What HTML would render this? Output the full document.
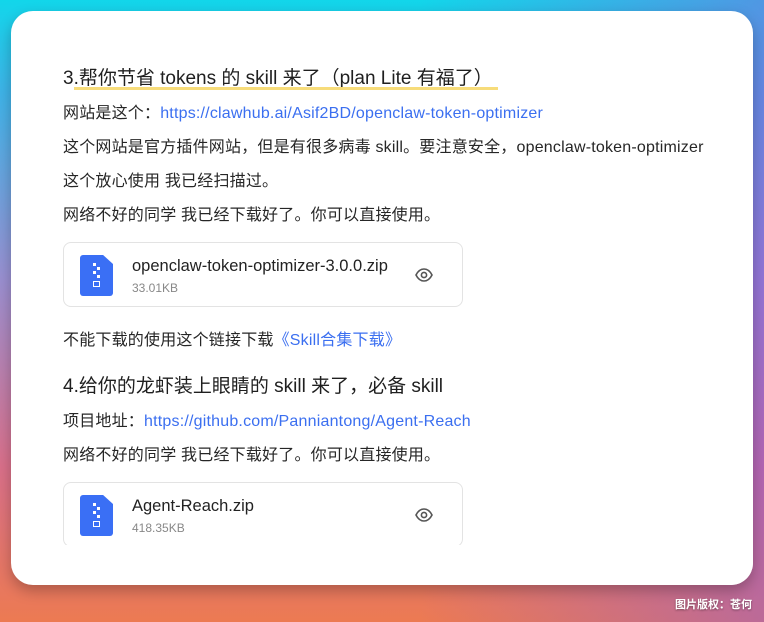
<!DOCTYPE html>
<html><head><meta charset="utf-8"><style>
*{margin:0;padding:0;box-sizing:border-box}
body{width:764px;height:622px;overflow:hidden;position:relative;font-family:"Liberation Sans","Noto Sans CJK SC",sans-serif;
background:linear-gradient(180deg,#12d6ea 0%,#3fb3e8 15%,#9a8fd0 45%,#d9708a 75%,#ec7a52 100%);}
.bgr{position:absolute;inset:0;background:linear-gradient(90deg,rgba(0,0,0,0) 55%,rgba(140,90,220,.5) 100%);}
.card{position:absolute;left:11px;top:11px;width:742px;height:574px;background:#fff;border-radius:22px;box-shadow:0 6px 14px rgba(0,0,0,.25);overflow:hidden}
.c{position:absolute;left:52px;top:0;width:680px;color:#262626;font-size:16px;letter-spacing:0.2px}
.t{position:absolute;white-space:nowrap}
h2{position:absolute;font-size:19px;font-weight:normal;color:#1f1f1f;white-space:nowrap;letter-spacing:0}
a{color:#3b6ff0;text-decoration:none}
.f{position:absolute;left:0;width:400px;height:65px;border:1px solid #e3e3e3;border-radius:8px;letter-spacing:0}
.ic{position:absolute;left:16px;top:12px;width:33px;height:41px;background:#3a6ff5;border-radius:3px;clip-path:polygon(0 0,70% 0,100% 22%,100% 100%,0 100%)}
.ic i{position:absolute;width:3px;height:3px;background:#fff}
.ic b{position:absolute;left:13px;top:26px;width:7px;height:6px;border:1.5px solid #fff}
.fn{position:absolute;left:68px;top:14px;font-size:16.5px;color:#222}
.fs{position:absolute;left:68px;top:38px;font-size:12px;color:#888}
.eye{position:absolute;left:350px;top:22px}
.cp{position:absolute;right:12px;top:596px;color:#fff;font-size:11px;font-weight:bold;text-shadow:0 1px 2px rgba(0,0,0,.4)}
</style></head><body><div class="bgr"></div>
<div class="card"><div class="c">
<h2 style="top:52px">3.帮你节省 tokens 的 skill 来了（plan Lite 有福了）</h2>
<div style="position:absolute;left:11px;top:76px;width:424px;height:3px;background:#f7dc7a"></div>
<div class="t" style="top:88px">网站是这个：<a>https://clawhub.ai/Asif2BD/openclaw-token-optimizer</a></div>
<div class="t" style="top:122px">这个网站是官方插件网站，但是有很多病毒 skill。要注意安全，openclaw-token-optimizer</div>
<div class="t" style="top:156px">这个放心使用 我已经扫描过。</div>
<div class="t" style="top:190px">网络不好的同学 我已经下载好了。你可以直接使用。</div>
<div class="f" style="top:231px"><div class="ic"><i style="left:13px;top:8px"></i><i style="left:17px;top:12px"></i><i style="left:13px;top:16px"></i><i style="left:17px;top:20px"></i><b></b></div><div class="fn">openclaw-token-optimizer-3.0.0.zip</div><div class="fs">33.01KB</div>
<svg class="eye" width="20" height="20" viewBox="0 0 20 20" fill="none" stroke="#555" stroke-width="1.6"><path d="M2 10c2-4 5-6 8-6s6 2 8 6c-2 4-5 6-8 6s-6-2-8-6z"/><circle cx="10" cy="10" r="2.6"/></svg></div>
<div class="t" style="top:315px">不能下载的使用这个链接下载<a>《Skill合集下载》</a></div>
<h2 style="top:360px">4.给你的龙虾装上眼睛的 skill 来了，必备 skill</h2>
<div class="t" style="top:396px">项目地址：<a>https://github.com/Panniantong/Agent-Reach</a></div>
<div class="t" style="top:430px">网络不好的同学 我已经下载好了。你可以直接使用。</div>
<div class="f" style="top:471px"><div class="ic"><i style="left:13px;top:8px"></i><i style="left:17px;top:12px"></i><i style="left:13px;top:16px"></i><i style="left:17px;top:20px"></i><b></b></div><div class="fn">Agent-Reach.zip</div><div class="fs">418.35KB</div>
<svg class="eye" width="20" height="20" viewBox="0 0 20 20" fill="none" stroke="#555" stroke-width="1.6"><path d="M2 10c2-4 5-6 8-6s6 2 8 6c-2 4-5 6-8 6s-6-2-8-6z"/><circle cx="10" cy="10" r="2.6"/></svg></div>
<div style="position:absolute;left:-10px;top:534px;width:720px;height:60px;background:#fff"></div>
</div></div>
<div class="cp">图片版权：苍何</div>
</body></html>
